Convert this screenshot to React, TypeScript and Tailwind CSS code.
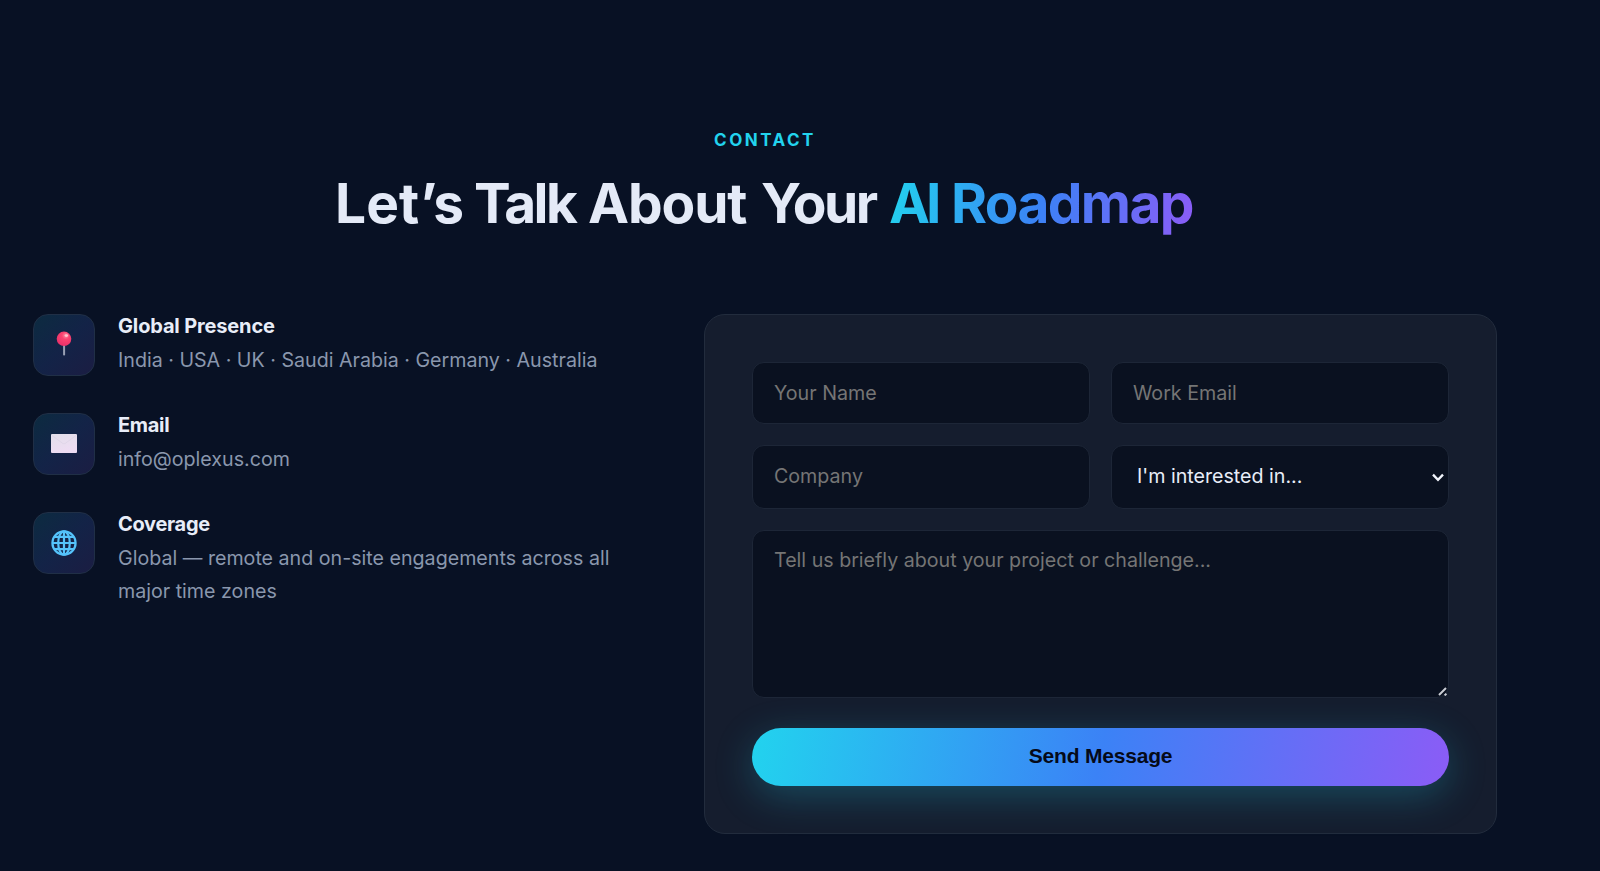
import React from 'react';

interface ContactItem {
  title: string;
  titleClass: string;
  text: string;
  icon: React.ReactNode;
}

const PinIcon = () => (
  <svg width="16" height="26" viewBox="0 0 16 26" className="-mt-[2px]">
    <defs>
      <radialGradient id="pin" cx="0.62" cy="0.28" r="0.75">
        <stop offset="0" stopColor="#ff8fa6" />
        <stop offset="0.35" stopColor="#fb4270" />
        <stop offset="1" stopColor="#e8306a" />
      </radialGradient>
    </defs>
    <rect x="7.1" y="13" width="2" height="11.5" rx="0.8" fill="#98a0b4" />
    <circle cx="8" cy="7.8" r="7.3" fill="url(#pin)" />
    <ellipse cx="10.4" cy="4.6" rx="1.7" ry="1.4" fill="#ffc4cf" />
  </svg>
);

const EnvelopeIcon = () => (
  <svg width="26" height="19" viewBox="0 0 26 19" className="-mt-[2px]">
    <defs>
      <linearGradient id="env" x1="0" y1="0" x2="0.4" y2="1">
        <stop offset="0" stopColor="#e2dfea" />
        <stop offset="1" stopColor="#eedcf3" />
      </linearGradient>
    </defs>
    <rect width="26" height="19" rx="1" fill="url(#env)" />
    <path d="M1 1.5 12 9.6q1 .6 2 0L25 1.5" fill="none" stroke="#dbd3e5" strokeWidth="0.7" />
  </svg>
);

const GlobeIcon = () => (
  <svg width="26" height="26" viewBox="0 0 26 26" fill="none" stroke="#55c3fb" strokeWidth="2.2" className="-mt-[1px]">
    <circle cx="13" cy="13" r="11.6" />
    <ellipse cx="13" cy="13" rx="5.8" ry="11.6" />
    <path d="M13 1.4v23.2M1.4 13h23.2M3.4 6.8h19.2M3.4 19.2h19.2" />
  </svg>
);

const items: ContactItem[] = [
  {
    title: 'Global Presence',
    titleClass: 'tracking-[-0.15px]',
    text: 'India · USA · UK · Saudi Arabia · Germany · Australia',
    icon: <PinIcon />,
  },
  { title: 'Email', titleClass: 'tracking-[-0.3px]', text: 'info@oplexus.com', icon: <EnvelopeIcon /> },
  {
    title: 'Coverage',
    titleClass: 'tracking-[-0.3px]',
    text: 'Global — remote and on-site engagements across all major time zones',
    icon: <GlobeIcon />,
  },
];

const fieldClass =
  'block w-full rounded-[12px] border border-[#1d2637] bg-[#0a1120] text-[19.65px] text-[#e8edf8] placeholder:text-[#757575] outline-none';

const App: React.FC = () => {
  return (
    <section className="h-[871px] overflow-hidden bg-[#081124] font-['Inter',sans-serif] text-[#e8edf8]">
      <div className="ml-[33px] w-[1464px] pt-[126px]">
        {/* Heading */}
        <div className="text-center">
          <p className="text-[17px] leading-[28px] font-bold tracking-[2.5px] text-[#22d3ee]">CONTACT</p>
          <h2 className="mt-[15px] ml-[302px] flex text-[55px] leading-[68px] font-bold whitespace-nowrap text-[#e4eaf7]">
            <span className="w-[139px] text-left tracking-[0.1px]">Let’s </span>
            <span className="w-[114px] text-left tracking-[-2.5px]">Talk </span>
            <span className="w-[173px] text-left tracking-[-1.1px]">About </span>
            <span className="w-[128px] text-left tracking-[-2.5px]">Your </span>
            <span className="bg-[linear-gradient(100deg,#22d3ee_0%,#3b82f6_50%,#8b5cf6_100%)] bg-clip-text text-transparent">
              <span className="mr-[2px] tracking-[-4px]">AI</span>
              <span className="tracking-[-1.6px]"> Roadmap</span>
            </span>
          </h2>
        </div>

        <div className="mt-[77px] grid grid-cols-[594px_793px] gap-[77px]">
          {/* Contact details */}
          <div className="flex flex-col gap-[37px]">
            {items.map((item) => (
              <div key={item.title} className="flex gap-[23px]">
                <div className="flex h-[62px] w-[62px] shrink-0 items-center justify-center rounded-[15px] border border-[#202f46] bg-[linear-gradient(135deg,#0c2b40_0%,#132347_50%,#1b1d43_100%)]">
                  {item.icon}
                </div>
                <div className="-mb-[1px] min-w-0 flex-1">
                  <h4 className={`text-[20px] leading-[25px] font-bold ${item.titleClass}`}>{item.title}</h4>
                  <p className="mt-[5px] text-[19.65px] leading-[33px] text-[#8a97ad]">{item.text}</p>
                </div>
              </div>
            ))}
          </div>

          {/* Form */}
          <form className="h-[520px] rounded-[21px] border border-[#222c3d] bg-[#151d2e] p-[47px]">
            <div className="grid grid-cols-2 gap-x-[21px] gap-y-[21px]">
              <input className={`${fieldClass} h-[62px] px-[21px]`} placeholder="Your Name" />
              <input className={`${fieldClass} h-[62px] px-[21px]`} placeholder="Work Email" />
              <input className={`${fieldClass} h-[64px] px-[21px] pb-[2px]`} placeholder="Company" />
              <div className="relative">
                <select className={`${fieldClass} h-[64px] appearance-none pl-[25px]`}>
                  <option>I'm interested in...</option>
                </select>
                <svg
                  className="pointer-events-none absolute top-[28px] right-[5px]"
                  width="12"
                  height="10"
                  viewBox="0 0 12 10"
                  fill="none"
                  stroke="#f1f4fb"
                  strokeWidth="2.3"
                >
                  <path d="M1 1.6 6 6.8l5-5.2" />
                </svg>
              </div>
            </div>
            <div className="relative mt-[21px]">
              <textarea
                className={`${fieldClass} h-[168px] resize-none px-[21px] py-[15px]`}
                placeholder="Tell us briefly about your project or challenge..."
              />
              <svg
                className="pointer-events-none absolute right-[2px] bottom-[2px]"
                width="9"
                height="9"
                viewBox="0 0 9 9"
                stroke="#c9ccd3"
                strokeWidth="2"
              >
                <path d="M1 8 8 1M6.6 8.4 8.4 6.6" />
              </svg>
            </div>
            <button
              type="button"
              className="mt-[30px] block h-[58px] w-full rounded-full bg-[linear-gradient(100deg,#22d3ee_0%,#3b82f6_50%,#8b5cf6_100%)] pb-[2px] font-['Liberation_Sans',sans-serif] text-[21px] font-bold tracking-[-0.2px] text-[#050a18] shadow-[0_10px_38px_rgba(34,211,238,0.25)]"
            >
              Send Message
            </button>
          </form>
        </div>
      </div>
    </section>
  );
};

export default App;
